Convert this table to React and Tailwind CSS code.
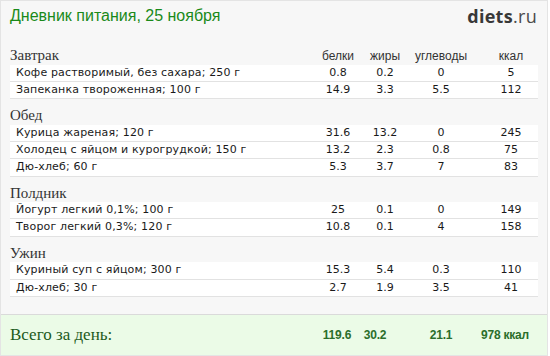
import React from 'react';

const meals = [
  {
    title: 'Завтрак',
    items: [
      ['Кофе растворимый, без сахара; 250 г', '0.8', '0.2', '0', '5'],
      ['Запеканка твороженная; 100 г', '14.9', '3.3', '5.5', '112'],
    ],
  },
  {
    title: 'Обед',
    items: [
      ['Курица жареная; 120 г', '31.6', '13.2', '0', '245'],
      ['Холодец с яйцом и курогрудкой; 150 г', '13.2', '2.3', '0.8', '75'],
      ['Дю-хлеб; 60 г', '5.3', '3.7', '7', '83'],
    ],
  },
  {
    title: 'Полдник',
    items: [
      ['Йогурт легкий 0,1%; 100 г', '25', '0.1', '0', '149'],
      ['Творог легкий 0,3%; 120 г', '10.8', '0.1', '4', '158'],
    ],
  },
  {
    title: 'Ужин',
    items: [
      ['Куриный суп с яйцом; 300 г', '15.3', '5.4', '0.3', '110'],
      ['Дю-хлеб; 30 г', '2.7', '1.9', '3.5', '41'],
    ],
  },
];

const cols = 'grid grid-cols-[1fr_68px_26px_86px_54px]';
const cell = 'flex justify-center whitespace-nowrap';

function Heading({ title, withCols }) {
  return (
    <div className={`${cols} items-baseline h-[25.5px] pt-[8px] mx-[9px]`}>
      <div className="font-['Liberation_Serif',serif] text-[15px] leading-[16px] text-[#333]">{title}</div>
      {withCols &&
        ['белки', 'жиры', 'углеводы', 'ккал'].map((h) => (
          <div key={h} className={`${cell} font-['Liberation_Sans',sans-serif] text-[12px] text-[#333]`}>
            {h}
          </div>
        ))}
    </div>
  );
}

function Row({ item }) {
  const [name, ...nums] = item;
  return (
    <div className={`${cols} items-center h-[17.33px] mx-[9px] bg-white border-b border-[#e2e2e2] font-['DejaVu_Sans',sans-serif] text-[11px] text-[#1a1a1a]`}>
      <div className="pl-[6px] whitespace-nowrap tracking-[0.15px]">{name}</div>
      {nums.map((n, i) => (
        <div key={i} className={cell}>
          {n}
        </div>
      ))}
    </div>
  );
}

export default function App() {
  return (
    <div className="w-[550px] h-[356px] bg-white">
      <div className="w-[548px] h-[356px] bg-[#f7f7f7] border border-[#e4e4e4] flex flex-col">
        <div className="h-[38px] flex justify-between px-[9px] pt-[5px]">
          <div className="font-['Liberation_Sans',sans-serif] text-[16px] leading-[20px] text-[#1a8a1a]">
            Дневник питания, 25 ноября
          </div>
          <div className="font-['Open_Sans',sans-serif] text-[18px] leading-[20px] pr-[1px] tracking-[0.3px]">
            <span className="font-bold text-[#383838]">diets</span>
            <span className="text-[#4a4a4a]">.ru</span>
          </div>
        </div>

        {meals.map((m, i) => (
          <div key={m.title}>
            <Heading title={m.title} withCols={i === 0} />
            {m.items.map((it, j) => (
              <Row key={j} item={it} />
            ))}
          </div>
        ))}

        <div className="mt-auto h-[40.7px] bg-[#ebfbe7] border-t border-[#dadada] px-[9px] pr-[10px] grid grid-cols-[1fr_8px_68px_64px_64px] items-center">
          <div className="font-['Liberation_Serif',serif] text-[17px] text-[#1c5a1c]">Всего за день:</div>
          {['119.6', '30.2', '21.1', '978 ккал'].map((t) => (
            <div key={t} className={`${cell} font-['Liberation_Sans',sans-serif] font-bold text-[12px] tracking-[-0.2px] text-[#2b6e2b]`}>
              {t}
            </div>
          ))}
        </div>
      </div>
    </div>
  );
}
